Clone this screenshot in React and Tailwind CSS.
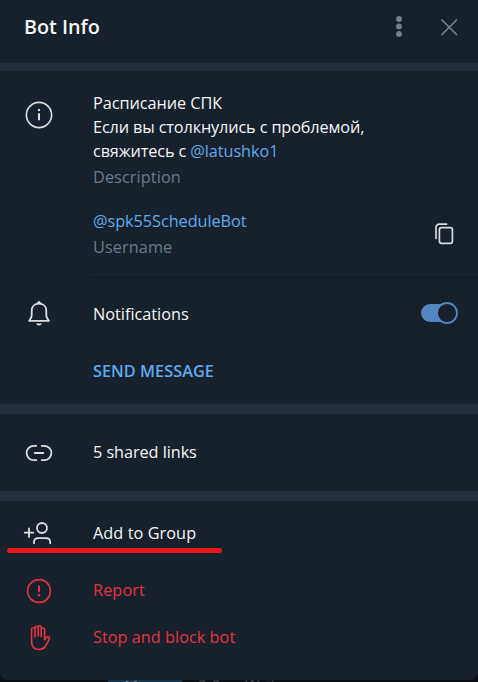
const stroke = {
  fill: 'none',
  stroke: 'currentColor',
  strokeWidth: 1.6,
  strokeLinecap: 'round',
  strokeLinejoin: 'round',
};

function Icon({ children, width = 1.6 }) {
  return (
    <svg width="32" height="32" viewBox="0 0 32 32" {...stroke} strokeWidth={width} className="shrink-0">
      {children}
    </svg>
  );
}

function InfoIcon() {
  return (
    <Icon>
      <circle cx="16" cy="16" r="12.6" />
      <path d="M16 14.2v7" strokeWidth="2" strokeLinecap="butt" />
      <circle cx="16" cy="11" r="1.2" fill="currentColor" stroke="none" />
    </Icon>
  );
}

function BellIcon() {
  return (
    <Icon width={1.8}>
      <path d="M6.100 22.900h19.800c-1.500-1.900-2.600-2.900-2.600-5.600v-4.400c0-4.200-2.900-7.300-7.300-7.300s-7.300 3.100-7.300 7.300v4.400c0 2.700-1.100 3.700-2.600 5.600z" />
      <path d="M14.500 5.100a1.500 1.500 0 0 1 3 0z" fill="currentColor" strokeWidth="1" />
      <path d="M13 25.400h6c-.5 1.300-1.600 2-3 2s-2.500-.7-3-2z" fill="currentColor" stroke="none" />
    </Icon>
  );
}

function LinkIcon() {
  return (
    <Icon width={1.8}>
      <path d="M13.300 8.800h-2.500a7.200 7.200 0 0 0 0 14.400h2.500M18.700 8.800h2.500a7.200 7.200 0 0 1 0 14.400h-2.500M11.700 16h8.600" />
    </Icon>
  );
}

function AddUserIcon() {
  return (
    <Icon width={1.8}>
      <circle cx="19" cy="11" r="5" />
      <path d="M11 26.300v-1c0-2.600 1.700-4.100 4.300-4.100h7.600c2.600 0 4.300 1.500 4.300 4.100v1M1.800 15.700h8.400M6 11.500v8.400" />
    </Icon>
  );
}

function ReportIcon() {
  return (
    <Icon>
      <circle cx="16" cy="17" r="11.400" />
      <path d="M16 11.600v6.600" strokeWidth="2" strokeLinecap="butt" />
      <circle cx="16" cy="21.200" r="1.200" fill="currentColor" stroke="none" />
    </Icon>
  );
}

function HandIcon() {
  return (
    <Icon>
      <path d="M12 16V8.500a1.700 1.700 0 0 0-3.400 0v11.700c0 5.200 2.800 8.300 7.400 8.300 3.600 0 5.500-1.400 7.200-4.500l3-5.700c.6-1.200.2-2-.6-2.400-1-.4-1.700 0-2.400.9l-1.600 2V8.700a1.700 1.700 0 0 0-3.400 0M12 8.500V7a1.600 1.600 0 0 1 3.200 0M15.200 15V6.300a1.500 1.500 0 0 1 3 0V15.500" />
    </Icon>
  );
}

function CopyIcon() {
  return (
    <svg width="20" height="24" viewBox="0 0 20 24" {...stroke} strokeWidth="1.7" className="text-[#d8dbdd]">
      <rect x="5.400" y="5.700" width="13" height="15.600" rx="2" />
      <path d="M2 16.500V5.700c0-2.300 1.300-3.600 3.600-3.600h7" />
    </svg>
  );
}

function Band({ className }) {
  return <div className={`shrink-0 bg-[#232e3c] ${className}`} />;
}

function Row({ icon, children, className, iconColor = 'text-[#dcdedf]', textClass = '' }) {
  return (
    <div className={`flex items-center pl-[23px] ${className}`}>
      <div className={iconColor}>{icon}</div>
      <span className={`ml-[38px] ${textClass}`}>{children}</span>
    </div>
  );
}

export default function App() {
  return (
    <div className="flex h-[682px] w-[478px] flex-col overflow-hidden bg-[#0c0f14] font-['Open_Sans','Noto_Sans',sans-serif] text-[16.250px] leading-6 whitespace-nowrap text-[#f5f5f5]">
      <div className="flex h-[680px] shrink-0 flex-col rounded-b-lg bg-[#17212b]">
        <header className="flex h-[63px] shrink-0 items-start justify-between pt-[15px] pr-5 pl-6">
          <h1 className="text-[19.750px] font-semibold">Bot Info</h1>
          <div className="flex text-[#768087]">
            <svg width="10" height="24" viewBox="0 0 10 24" fill="currentColor" className="mr-9">
              <circle cx="5" cy="4" r="2.900" />
              <circle cx="5" cy="11.500" r="2.900" />
              <circle cx="5" cy="19" r="2.900" />
            </svg>
            <svg width="18" height="24" viewBox="0 0 18 24" {...stroke} strokeWidth="1.700">
              <path d="M2 5l14.500 14.500M16.500 5L2 19.500" />
            </svg>
          </div>
        </header>
        <Band className="h-2" />
        <section className="flex h-[333px] shrink-0 flex-col">
          <div className="flex pt-5 pl-[23px]">
            <div className="mt-2 text-[#dcdedf]"><InfoIcon /></div>
            <div className="ml-[38px]">
              <p><span className="tracking-[-0.05px]">Расписание СПК</span><br /><span className="tracking-[-0.13px]">Если вы столкнулись с проблемой,<br />свяжитесь с </span><span className="tracking-[-0.05px] text-[#5eaaee]">@latushko1</span></p>
              <p className="mt-0.5 tracking-[0.1px] text-[#6b7b8d]">Description</p>
            </div>
          </div>
          <div className="mt-5 flex items-center justify-between pr-6 pl-[93px]">
            <div>
              <p className="tracking-[-0.05px] text-[#5eaaee]">@spk55ScheduleBot</p>
              <p className="mt-0.5 tracking-[0.1px] text-[#6b7b8d]">Username</p>
            </div>
            <CopyIcon />
          </div>
          <div className="mt-[18px] ml-[90px] h-px bg-[#101921]" />
          <div className="mt-5 flex items-center justify-between pr-5">
            <Row icon={<BellIcon />}>Notifications</Row>
            <svg width="38" height="24" viewBox="0 0 38 24">
              <rect x="1" y="2" width="32" height="18" rx="9" fill="#5288c1" />
              <circle cx="27" cy="11" r="10" fill="#17212b" stroke="#5288c1" strokeWidth="1.800" />
            </svg>
          </div>
          <div className="mt-[29px] pl-[93px] font-semibold tracking-[0.04px] text-[#5eaaee]">SEND MESSAGE</div>
        </section>
        <Band className="h-2.5" />
        <Row icon={<LinkIcon />} className="h-[77px] shrink-0" textClass="-mt-0.5 tracking-[-0.06px]">5 shared links</Row>
        <Band className="h-2.5" />
        <section className="relative flex flex-col pt-4">
          <Row icon={<AddUserIcon />} className="h-8" textClass="tracking-[0.07px]">Add to Group</Row>
          <div className="absolute top-[47px] left-[7px] h-[5px] w-[215px] rounded-full bg-[#e6191c]" />
          <Row icon={<ReportIcon />} className="mt-[25px] h-8 text-[#e33541]" iconColor="" textClass="tracking-[0.1px]">Report</Row>
          <Row icon={<HandIcon />} className="mt-[15px] h-8 text-[#e33541]" iconColor="" textClass="tracking-[0.03px]">Stop and block bot</Row>
        </section>
      </div>
      <div className="flex h-0.5 shrink-0 overflow-hidden pl-[108px] text-[#3a3f44]">
        <div className="flex h-6 w-[74px] justify-center bg-[#17344e] text-[#7b8790]"><span className="-mt-[7px] text-[15px] font-semibold">Menu</span></div>
        <span className="-mt-[6px] ml-4">2.0</span>
        <span className="-mt-[7px] ml-6">Write a message...</span>
      </div>
    </div>
  );
}
